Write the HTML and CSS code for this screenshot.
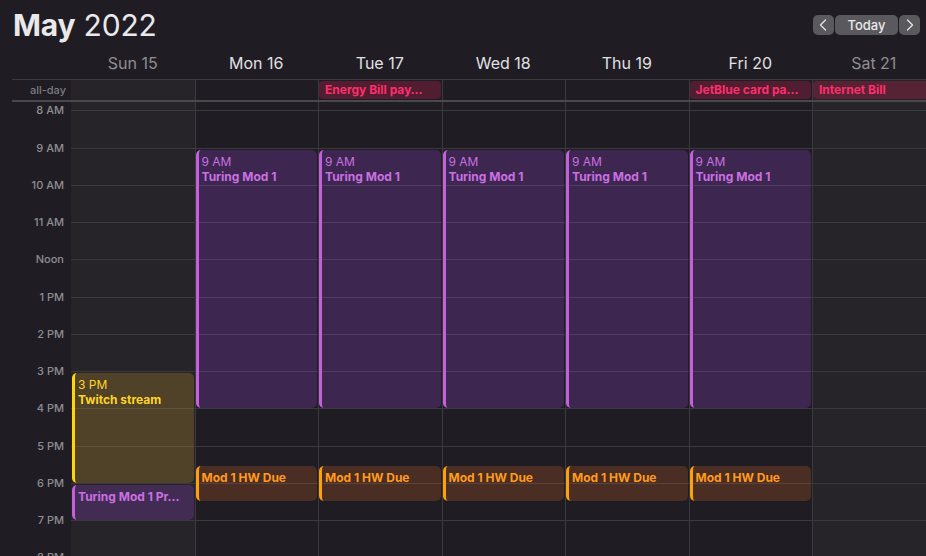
FILE: index.html
```html
<!DOCTYPE html>
<html lang="en">
<head>
<meta charset="utf-8">
<title>Calendar — May 2022</title>
<link rel="stylesheet" href="styles.css">
</head>
<body>
<header class="toolbar">
  <h1 class="title"><b>May</b> 2022</h1>
  <div class="nav">
    <button class="nav-btn icon" aria-label="Previous"><svg width="21" height="20" viewBox="0 0 21 20"><polyline points="12.5,5 7.5,10 12.5,15" fill="none" stroke="#e2e2e4" stroke-width="1.4" stroke-linecap="round" stroke-linejoin="round"/></svg></button>
    <button class="nav-btn today">Today</button>
    <button class="nav-btn icon" aria-label="Next"><svg width="21" height="20" viewBox="0 0 21 20"><polyline points="8.5,5 13.5,10 8.5,15" fill="none" stroke="#e2e2e4" stroke-width="1.4" stroke-linecap="round" stroke-linejoin="round"/></svg></button>
  </div>
</header>

<div class="days">
  <div></div>
  <div class="day weekend">Sun 15</div>
  <div class="day">Mon 16</div>
  <div class="day">Tue 17</div>
  <div class="day">Wed 18</div>
  <div class="day">Thu 19</div>
  <div class="day">Fri 20</div>
  <div class="day weekend">Sat 21</div>
</div>

<div class="allday">
  <div class="allday-label">all-day</div>
  <div class="allday-cell weekend"></div>
  <div class="allday-cell"></div>
  <div class="allday-cell"><span class="allday-event">Energy Bill pay…</span></div>
  <div class="allday-cell"></div>
  <div class="allday-cell"></div>
  <div class="allday-cell"><span class="allday-event">JetBlue card pa…</span></div>
  <div class="allday-cell weekend"><span class="allday-event">Internet Bill</span></div>
</div>

<div class="scroll">
  <div class="timeline">
    <div class="hour"><div class="time"></div><div class="cell weekend"></div><div class="cell"></div><div class="cell"></div><div class="cell"></div><div class="cell"></div><div class="cell"></div><div class="cell weekend"></div></div>
    <div class="hour"><div class="time">8 AM</div><div class="cell weekend"></div><div class="cell"></div><div class="cell"></div><div class="cell"></div><div class="cell"></div><div class="cell"></div><div class="cell weekend"></div></div>
    <div class="hour"><div class="time">9 AM</div><div class="cell weekend"></div><div class="cell"></div><div class="cell"></div><div class="cell"></div><div class="cell"></div><div class="cell"></div><div class="cell weekend"></div></div>
    <div class="hour"><div class="time">10 AM</div><div class="cell weekend"></div><div class="cell"></div><div class="cell"></div><div class="cell"></div><div class="cell"></div><div class="cell"></div><div class="cell weekend"></div></div>
    <div class="hour"><div class="time">11 AM</div><div class="cell weekend"></div><div class="cell"></div><div class="cell"></div><div class="cell"></div><div class="cell"></div><div class="cell"></div><div class="cell weekend"></div></div>
    <div class="hour"><div class="time">Noon</div><div class="cell weekend"></div><div class="cell"></div><div class="cell"></div><div class="cell"></div><div class="cell"></div><div class="cell"></div><div class="cell weekend"></div></div>
    <div class="hour"><div class="time">1 PM</div><div class="cell weekend"></div><div class="cell"></div><div class="cell"></div><div class="cell"></div><div class="cell"></div><div class="cell"></div><div class="cell weekend"></div></div>
    <div class="hour"><div class="time">2 PM</div><div class="cell weekend"></div><div class="cell"></div><div class="cell"></div><div class="cell"></div><div class="cell"></div><div class="cell"></div><div class="cell weekend"></div></div>
    <div class="hour"><div class="time">3 PM</div><div class="cell weekend"></div><div class="cell"></div><div class="cell"></div><div class="cell"></div><div class="cell"></div><div class="cell"></div><div class="cell weekend"></div></div>
    <div class="hour"><div class="time">4 PM</div><div class="cell weekend"></div><div class="cell"></div><div class="cell"></div><div class="cell"></div><div class="cell"></div><div class="cell"></div><div class="cell weekend"></div></div>
    <div class="hour"><div class="time">5 PM</div><div class="cell weekend"></div><div class="cell"></div><div class="cell"></div><div class="cell"></div><div class="cell"></div><div class="cell"></div><div class="cell weekend"></div></div>
    <div class="hour"><div class="time">6 PM</div><div class="cell weekend"></div><div class="cell"></div><div class="cell"></div><div class="cell"></div><div class="cell"></div><div class="cell"></div><div class="cell weekend"></div></div>
    <div class="hour"><div class="time">7 PM</div><div class="cell weekend"></div><div class="cell"></div><div class="cell"></div><div class="cell"></div><div class="cell"></div><div class="cell"></div><div class="cell weekend"></div></div>
    <div class="hour"><div class="time">8 PM</div><div class="cell weekend"></div><div class="cell"></div><div class="cell"></div><div class="cell"></div><div class="cell"></div><div class="cell"></div><div class="cell weekend"></div></div>

    <div class="events">
      <div></div>
      <div class="col">
        <div class="event yellow" style="top:300px;height:110px"><div>3 PM</div><div class="ev-title">Twitch stream</div></div>
        <div class="event purple" style="top:412px;height:34.7px"><div class="ev-title">Turing Mod 1 Pr…</div></div>
      </div>
      <div class="col">
        <div class="event purple" style="top:76.5px;height:258px"><div>9 AM</div><div class="ev-title">Turing Mod 1</div></div>
        <div class="event orange" style="top:393.3px;height:34.7px"><div class="ev-title">Mod 1 HW Due</div></div>
      </div>
      <div class="col">
        <div class="event purple" style="top:76.5px;height:258px"><div>9 AM</div><div class="ev-title">Turing Mod 1</div></div>
        <div class="event orange" style="top:393.3px;height:34.7px"><div class="ev-title">Mod 1 HW Due</div></div>
      </div>
      <div class="col">
        <div class="event purple" style="top:76.5px;height:258px"><div>9 AM</div><div class="ev-title">Turing Mod 1</div></div>
        <div class="event orange" style="top:393.3px;height:34.7px"><div class="ev-title">Mod 1 HW Due</div></div>
      </div>
      <div class="col">
        <div class="event purple" style="top:76.5px;height:258px"><div>9 AM</div><div class="ev-title">Turing Mod 1</div></div>
        <div class="event orange" style="top:393.3px;height:34.7px"><div class="ev-title">Mod 1 HW Due</div></div>
      </div>
      <div class="col">
        <div class="event purple" style="top:76.5px;height:258px"><div>9 AM</div><div class="ev-title">Turing Mod 1</div></div>
        <div class="event orange" style="top:393.3px;height:34.7px"><div class="ev-title">Mod 1 HW Due</div></div>
      </div>
      <div class="col"></div>
    </div>
  </div>
</div>
</body>
</html>
```

FILE: styles.css
```css
* { box-sizing: border-box; }

html, body {
  margin: 0;
  width: 926px;
  height: 556px;
  overflow: hidden;
}

body {
  background: #1f1d23;
  color: #e6e5e8;
  font-family: Inter, "Noto Sans", "Liberation Sans", sans-serif;
}

/* toolbar */
.toolbar {
  display: flex;
  justify-content: space-between;
  align-items: flex-start;
  height: 45px;
  padding: 0 6px 0 13px;
}

.title {
  margin: 0;
  padding-top: 7px;
  font-size: 30px;
  line-height: 36px;
  font-weight: 400;
  color: #e9e8eb;
  letter-spacing: -0.2px;
}

.title b { font-weight: 700; }

.nav {
  display: flex;
  gap: 1px;
  margin-top: 15px;
}

.nav-btn {
  height: 20px;
  border: 0;
  padding: 0;
  background: #5a595e;
  border-radius: 5px;
  color: #e8e8ea;
  font-family: Inter, "Noto Sans", sans-serif;
  font-size: 13px;
  font-weight: 500;
  line-height: 20px;
  display: flex;
  align-items: center;
  justify-content: center;
}

.nav-btn.icon { width: 21px; }
.nav-btn.today { width: 63px; }
.nav-btn svg { display: block; }

/* shared column template */
.days,
.allday,
.hour,
.events {
  display: grid;
  grid-template-columns: 59px repeat(7, 123.5px);
}

/* day names */
.days {
  margin-left: 12px;
  height: 34px;
}

.day {
  text-align: center;
  font-size: 16px;
  line-height: 20px;
  padding-top: 8px;
  color: #e1e0e4;
}

.day.weekend { color: #8f8e93; }

/* all-day row */
.allday {
  margin-left: 12px;
  height: 23px;
  border-top: 1px solid #3a393d;
  border-bottom: 2px solid #49484c;
}

.allday-label {
  font-size: 11px;
  line-height: 20px;
  font-weight: 500;
  text-align: right;
  padding-right: 5px;
  color: #7d7c81;
}

.allday-cell { padding: 1px 1px 0 0; }
.allday-cell:nth-child(n+3) { border-left: 1px solid #3a393d; }

.weekend.allday-cell,
.cell.weekend { background: #262429; }

.allday-event {
  display: block;
  height: 18px;
  padding: 0 6px;
  border-radius: 4px;
  background: rgba(232, 30, 90, 0.25);
  color: #ff2d6c;
  font-size: 12px;
  font-weight: 700;
  line-height: 18px;
  white-space: nowrap;
  overflow: hidden;
}

/* timed grid */
.scroll {
  height: 454px;
  overflow: hidden;
}

.timeline {
  position: relative;
  margin-top: -29px;
  margin-left: 12px;
}

.hour { height: 37.27px; }

.time {
  margin-top: -7px;
  height: 14px;
  font-size: 11px;
  line-height: 14px;
  font-weight: 500;
  text-align: right;
  padding-right: 7px;
  color: #8e8d92;
  white-space: nowrap;
}

.cell { border-top: 1px solid #3a393d; }
.cell:nth-child(n+3) { border-left: 1px solid #3a393d; }

.events {
  position: absolute;
  inset: 0;
}

.col { position: relative; }

.event {
  position: absolute;
  left: 1px;
  right: 1px;
  border-left: 3px solid;
  border-radius: 5px;
  padding: 4px 4px 0 3px;
  overflow: hidden;
  font-size: 12px;
  line-height: 15px;
  white-space: nowrap;
}

.ev-title { font-weight: 700; }

.purple {
  background: rgba(170, 75, 235, 0.22);
  border-color: #c55fdb;
  color: #cb6fe3;
}

.yellow {
  background: rgba(243, 191, 41, 0.2);
  border-color: #ffd60a;
  color: #ffd426;
}

.orange {
  background: rgba(250, 110, 36, 0.2);
  border-color: #ff9f0a;
  color: #ff9b1c;
}
```
